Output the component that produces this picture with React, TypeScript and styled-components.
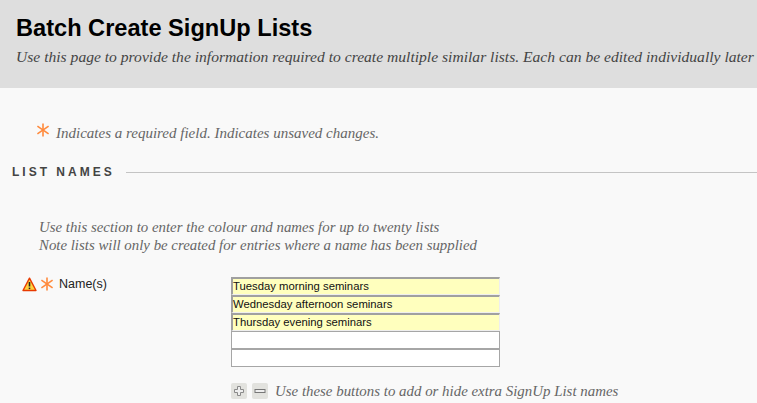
import * as React from 'react';
import styled, { createGlobalStyle } from 'styled-components';

const GlobalStyle = createGlobalStyle`
	html, body {
		margin: 0;
		padding: 0;
		height: 100%;
		overflow: hidden;
		background: #f9f9f9;
	}
`;

const serif = `'Liberation Serif', serif`;
const sans = `'Liberation Sans', Arial, sans-serif`;

const Page = styled.div`
	width: 757px;
	height: 403px;
	overflow: hidden;
	background: #f9f9f9;
`;

const Header = styled.header`
	height: 88px;
	box-sizing: border-box;
	padding: 14px 0 0 16px;
	background: #dedede;
`;

const Title = styled.h1`
	margin: 0;
	font: bold 23.6px/28px ${sans};
	color: #000;
`;

const Lead = styled.p`
	margin: 6px 0 0;
	font: italic 15.6px/18px ${serif};
	color: #444;
	white-space: nowrap;
`;

const Note = styled.p<{ $indent: number }>`
	margin: 0;
	padding-left: ${(p) => p.$indent}px;
	font: italic 14.85px/18px ${serif};
	color: #666;
	white-space: nowrap;
`;

const RequiredNote = styled.div`
	display: flex;
	align-items: flex-start;
	gap: 6px;
	padding: 36px 0 0 36px;
	height: 18px;
	font: italic 15px/18px ${serif};
	color: #666;

	svg {
		margin-top: -1px;
	}
`;

const SectionHead = styled.div`
	display: flex;
	align-items: center;
	gap: 11px;
	margin: 22px 0 0 12px;
`;

const SectionTitle = styled.h2`
	margin: 0;
	font: bold 12px/16px ${sans};
	letter-spacing: 3px;
	color: #444;
`;

const Rule = styled.div`
	flex: 1;
	height: 1px;
	background: #c4c4c4;
`;

const Intro = styled.div`
	margin-top: 38px;
`;

const FieldRow = styled.div`
	display: grid;
	grid-template-columns: 231px 269px;
	margin-top: 23px;
`;

const LabelCell = styled.div`
	display: flex;
	align-items: flex-start;
	padding: 0 0 0 22px;
	gap: 3px;
	font: 12.5px/15px ${sans};
	color: #222;

	span {
		margin-left: 2px;
	}
`;

const Inputs = styled.div`
	display: flex;
	flex-direction: column;
`;

const NameInput = styled.div<{ $filled: boolean }>`
	height: 18px;
	box-sizing: border-box;
	font: 11.3px/15px ${sans};
	color: #111;
	background: ${(p) => (p.$filled ? '#ffffbe' : '#fff')};
	border-style: solid;
	border-width: ${(p) => (p.$filled ? '2px 1px 1px 2px' : '1px')};
	border-color: ${(p) =>
		p.$filled ? '#a0a0a0 #eeeeee #eeeeee #a0a0a0' : '#a6a6a6'};
`;

const ButtonRow = styled.div`
	display: flex;
	align-items: center;
	gap: 5px;
	margin: 16px 0 0 231px;
`;

const IconButton = styled.button`
	display: flex;
	align-items: center;
	justify-content: center;
	width: 16px;
	height: 16px;
	padding: 0;
	border: 0;
	border-radius: 2px;
	background: #e2e2de;
`;

const ButtonHint = styled.span`
	margin-left: 2px;
	font: italic 14.9px/16px ${serif};
	color: #666;
	white-space: nowrap;
`;

const Asterisk: React.FC<{ size: number }> = ({ size }) => (
	<svg width={size} height={size} viewBox="0 0 14 14" fill="none">
		<g stroke="#ff8a3c" strokeWidth="1.6" strokeLinecap="butt">
			<path d="M7 .5v13" />
			<path d="M1.4 3.2l11.2 7.6" />
			<path d="M12.6 3.2L1.4 10.8" />
		</g>
	</svg>
);

const Warning = () => (
	<svg width="15" height="15" viewBox="0 0 15 15">
		<path d="M7.5 1.2L14 13.5H1z" fill="#ffd23c" stroke="#e83a00" strokeWidth="1.4" strokeLinejoin="round" />
		<path d="M7.5 5v4.5" stroke="#222" strokeWidth="1.6" />
		<path d="M7.5 10.6v1.5" stroke="#222" strokeWidth="1.6" />
	</svg>
);

const names = [
	'Tuesday morning seminars',
	'Wednesday afternoon seminars',
	'Thursday evening seminars',
	'',
	'',
];

export default function App() {
	return (
		<Page>
			<GlobalStyle />
			<Header>
				<Title>Batch Create SignUp Lists</Title>
				<Lead>
					Use this page to provide the information required to create multiple similar
					lists. Each can be edited individually later
				</Lead>
			</Header>
			<RequiredNote>
				<Asterisk size={14} />
				<span>Indicates a required field. Indicates unsaved changes.</span>
			</RequiredNote>
			<SectionHead>
				<SectionTitle>LIST NAMES</SectionTitle>
				<Rule />
			</SectionHead>
			<Intro>
				<Note $indent={39}>Use this section to enter the colour and names for up to twenty lists</Note>
				<Note $indent={39}>Note lists will only be created for entries where a name has been supplied</Note>
			</Intro>
			<FieldRow>
				<LabelCell>
					<Warning />
					<Asterisk size={14} />
					<span>Name(s)</span>
				</LabelCell>
				<Inputs>
					{names.map((name, i) => (
						<NameInput key={i} $filled={name !== ''}>
							{name}
						</NameInput>
					))}
				</Inputs>
			</FieldRow>
			<ButtonRow>
				<IconButton aria-label="Add">
					<svg width="12" height="12" viewBox="0 0 12 12">
						<path d="M4.5 1.5h3v3h3v3h-3v3h-3v-3h-3v-3h3z" fill="#eee" stroke="#8a8a8a" />
					</svg>
				</IconButton>
				<IconButton aria-label="Hide">
					<svg width="12" height="12" viewBox="0 0 12 12">
						<rect x="1" y="4.5" width="10" height="3" fill="#eee" stroke="#777" />
					</svg>
				</IconButton>
				<ButtonHint>Use these buttons to add or hide extra SignUp List names</ButtonHint>
			</ButtonRow>
		</Page>
	);
}
